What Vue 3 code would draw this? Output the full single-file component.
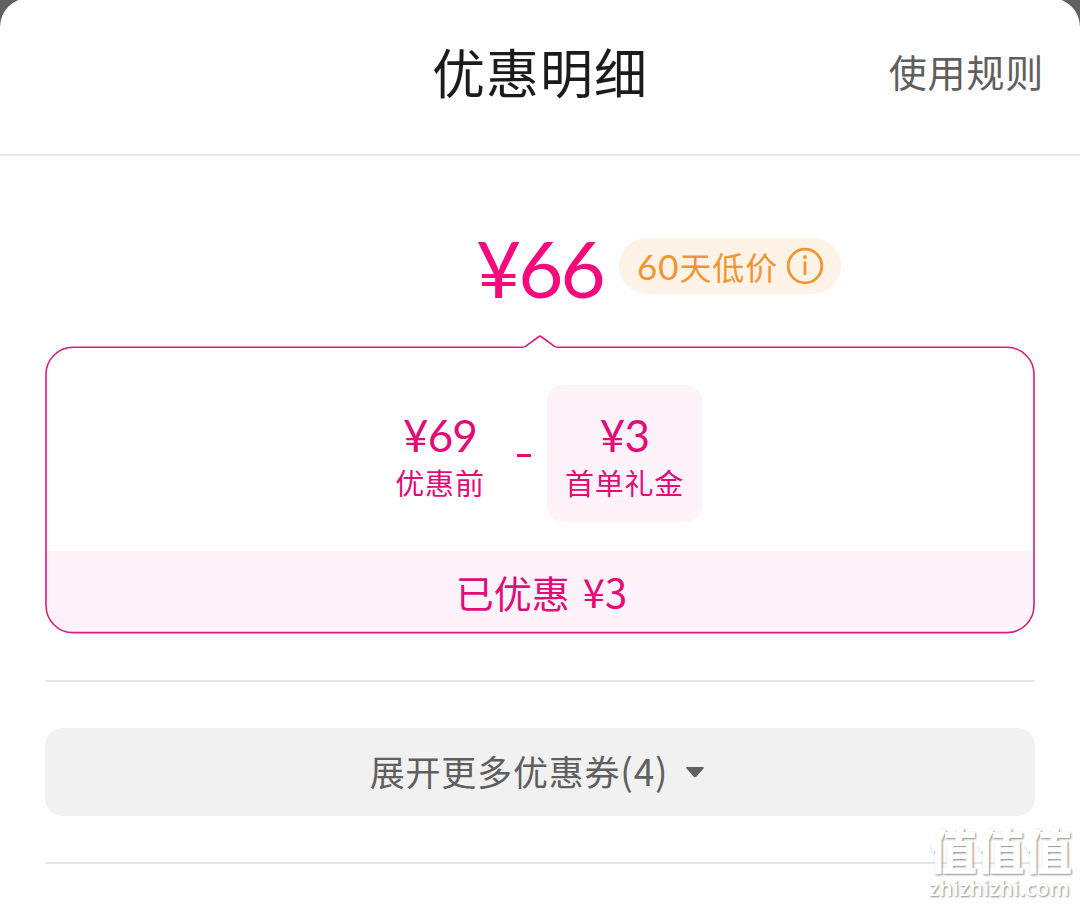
<template>
  <div class="page">
    <div class="sheet">
      <header class="header">
        <h1 class="title">优惠明细</h1>
        <a class="rules">使用规则</a>
      </header>

      <main class="content">
        <div class="price-row">
          <span class="price">¥{{ finalPrice }}</span>
          <span class="badge">
            <span class="badge-text"><span class="num">60</span>天低价</span>
            <svg class="info" viewBox="0 0 38 38">
              <circle cx="19" cy="19" r="16.8" />
              <path d="M19 14.500V28" />
              <circle class="dot" cx="19" cy="10" r="1.9" />
            </svg>
          </span>
        </div>

        <section class="card">
          <!-- outline with the small arrow pointing at the price -->
          <svg class="outline" viewBox="0 0 990 300">
            <path d="M28 13.3H477Q479 13.3 480.500 12.300L494 2.500Q495 1.800 496 2.500L509.500 12.300Q511 13.3 513 13.3H962A27 27 0 0 1 989 40.300V271.600A27 27 0 0 1 962 298.600H28A27 27 0 0 1 1 271.600V40.300A27 27 0 0 1 28 13.3Z" />
          </svg>
          <div class="formula">
            <div class="item before">
              <span class="amount">¥{{ originalPrice }}</span>
              <span class="label">优惠前</span>
            </div>
            <span class="minus"></span>
            <div class="item gift">
              <span class="amount">¥{{ gift }}</span>
              <span class="label">首单礼金</span>
            </div>
          </div>
          <div class="total">
            <span class="total-label">已优惠</span>
            <span class="total-num">¥{{ saved }}</span>
          </div>
        </section>

        <div class="line"></div>

        <button class="more">
          <span>展开更多优惠券<span class="count">({{ couponCount }})</span></span>
          <svg class="arrow" viewBox="0 0 20 12">
            <path d="M2 1H18Q20 1 18.500 2.500L11.500 10.500Q10 12 8.500 10.500L1.500 2.500Q0 1 2 1Z" />
          </svg>
        </button>

        <div class="line"></div>
      </main>
    </div>

    <div class="watermark">
      <span class="mark-big">值值值</span>
      <span class="mark-url">zhizhizhi.com</span>
    </div>
  </div>
</template>

<script setup>
import { ref, computed } from 'vue';

const originalPrice = ref(69);
const gift = ref(3);
const couponCount = ref(4);

const saved = computed(() => gift.value);
const finalPrice = computed(() => originalPrice.value - saved.value);
</script>

<style>
body {
  margin: 0;
}
</style>

<style scoped>
.page {
  position: relative;
  width: 1080px;
  height: 906px;
  overflow: hidden;
  background: #616161;
  font-family: "Noto Sans CJK SC", sans-serif;
}

.sheet {
  height: 906px;
  background: #fefefe;
  border-radius: 29px 29px 0 0;
  margin-top: -2px;
  padding-top: 2px;
}

.header {
  display: grid;
  grid-template-columns: 1fr auto 1fr;
  align-items: center;
  height: 154px;
  padding: 0 36px;
  border-bottom: 2px solid #e5e5e5;
}

.title {
  grid-column: 2;
  margin: 0;
  padding-bottom: 13px;
  font-size: 53px;
  line-height: 80px;
  font-weight: 400;
  letter-spacing: 1px;
  color: #1b1b1b;
}

.rules {
  justify-self: end;
  padding-bottom: 13px;
  font-size: 38px;
  line-height: 56px;
  letter-spacing: 0.8px;
  color: #5f5f5f;
}

.content {
  padding: 0 45px;
}

.price-row {
  display: flex;
  align-items: center;
  height: 178px;
  padding-left: 431px;
}

.price {
  width: 130px;
  margin-top: 46px;
  font-family: Lato, sans-serif;
  font-size: 78px;
  line-height: 90px;
  letter-spacing: -3px;
  color: #f50a7c;
}

.badge {
  display: flex;
  align-items: center;
  box-sizing: border-box;
  width: 222px;
  height: 56px;
  margin-left: 13px;
  margin-top: 42px;
  padding-left: 18px;
  border-radius: 28px;
  background: #fff3e8;
  color: #f3952f;
  font-size: 32px;
  line-height: 56px;
  white-space: nowrap;
}

.badge-text {
  width: 140px;
  letter-spacing: 0.9px;
}

.num {
  font-family: Lato, sans-serif;
  font-size: 35px;
}

.info {
  width: 38px;
  height: 38px;
  margin-left: 9px;
  fill: none;
  stroke: #f3952f;
  stroke-width: 2.8;
}

.info .dot {
  fill: #f3952f;
  stroke: none;
}

.card {
  position: relative;
  height: 300px;
  color: #e20c77;
}

.outline {
  position: absolute;
  inset: 0;
  width: 990px;
  height: 300px;
  fill: none;
  stroke: #d91c7c;
  stroke-width: 1.6;
}

.formula {
  display: flex;
  justify-content: center;
  box-sizing: border-box;
  height: 217px;
  padding: 51px 0 30px;
}

.item {
  display: flex;
  flex-direction: column;
  align-items: center;
  box-sizing: border-box;
  height: 137px;
  padding-top: 24px;
  border-radius: 16px;
}

.before {
  width: 124px;
}

.gift {
  width: 155px;
  background: #fff3fb;
}

.amount {
  font-family: Lato, sans-serif;
  font-size: 44px;
  line-height: 52px;
  letter-spacing: -0.8px;
}

.label {
  margin-top: -1px;
  font-size: 29px;
  line-height: 44px;
  letter-spacing: 0.8px;
}

.minus {
  width: 14px;
  height: 3px;
  margin: 69px 16px 0 15px;
  background: #e20c77;
}

.total {
  display: flex;
  justify-content: center;
  gap: 13px;
  height: 81px;
  margin: 0 2px;
  padding-left: 3px;
  border-radius: 0 0 26px 26px;
  background: #fff3fb;
  font-size: 38px;
  line-height: 82px;
}

.total-num {
  font-size: 40px;
  line-height: 81px;
}

.line {
  height: 2px;
  margin-top: 46px;
  background: #e5e5e5;
}

.more {
  display: flex;
  align-items: center;
  justify-content: center;
  gap: 17px;
  box-sizing: border-box;
  width: 990px;
  height: 88px;
  margin-top: 46px;
  padding: 0 5px 3px 0;
  border: 0;
  border-radius: 18px;
  background: #f1f1f1;
  color: #5f5f5f;
  font-family: inherit;
  font-size: 35px;
  line-height: 85px;
  letter-spacing: 0.8px;
}

.count {
  font-size: 37px;
}

.arrow {
  width: 20px;
  height: 12px;
  margin-top: 2px;
  fill: #606060;
}

.watermark {
  position: absolute;
  right: 8px;
  bottom: 6px;
  display: flex;
  flex-direction: column;
  width: 143px;
  color: #fff;
  text-shadow: 1px 1px 2px #888;
}

.mark-big {
  font-size: 48px;
  line-height: 56px;
  font-weight: 900;
  letter-spacing: -0.5px;
}

.mark-url {
  font-family: "Open Sans", sans-serif;
  font-size: 21px;
  line-height: 24px;
  font-weight: 600;
  letter-spacing: 0.3px;
}
</style>
